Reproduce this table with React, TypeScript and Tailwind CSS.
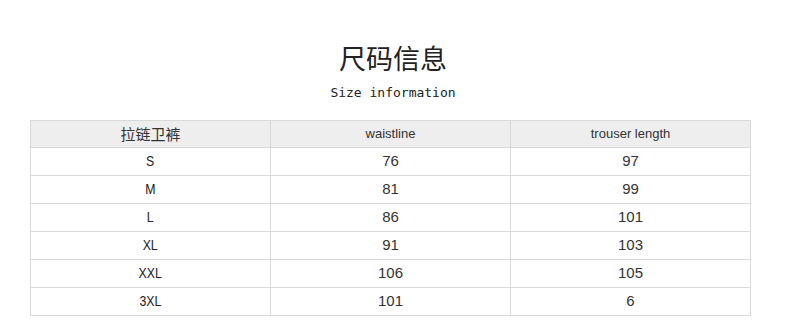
import React from 'react';

const rows = [
  { size: 'S', waist: '76', length: '97' },
  { size: 'M', waist: '81', length: '99' },
  { size: 'L', waist: '86', length: '101' },
  { size: 'XL', waist: '91', length: '103' },
  { size: 'XXL', waist: '106', length: '105' },
  { size: '3XL', waist: '101', length: '6' },
];

const cell = 'flex items-center justify-center border-r border-b border-[#d9d9d9]';

const App: React.FC = () => {
  return (
    <div className="w-[790px] h-[320px] bg-white overflow-hidden pt-[42px] pl-[30px] text-[#222]">
      <div className="w-[720px] flex flex-col items-center">
        <h1 className="text-[27px] leading-[32px] font-normal [font-family:'Noto_Sans_CJK_SC',sans-serif] translate-x-[3px]">
          尺码信息
        </h1>
        <p className="mt-[9px] text-[13px] leading-[20px] [font-family:'DejaVu_Sans_Mono','Liberation_Mono',monospace] translate-x-[3px]">
          Size information
        </p>
      </div>

      <div className="mt-[17px] w-[721px] grid grid-cols-[240px_240px_240px] border-l border-t border-[#d9d9d9]">
        <div className={`${cell} h-[27px] bg-[#eeeeee] text-[15px] [font-family:'Noto_Sans_CJK_SC',sans-serif] text-[#333]`}>
          拉链卫裤
        </div>
        <div className={`${cell} h-[27px] bg-[#eeeeee] text-[13px] [font-family:'Liberation_Sans',Arial,sans-serif] text-[#333]`}>
          waistline
        </div>
        <div className={`${cell} h-[27px] bg-[#eeeeee] text-[13px] [font-family:'Liberation_Sans',Arial,sans-serif] text-[#333]`}>
          trouser length
        </div>

        {rows.map((r) => (
          <React.Fragment key={r.size}>
            <div className={`${cell} h-[28px] text-[15px] [font-family:'Liberation_Sans',Arial,sans-serif] text-[#222]`}>
              <span className="inline-block scale-x-[0.82]">{r.size}</span>
            </div>
            <div className={`${cell} h-[28px] text-[15px] [font-family:'Liberation_Sans',Arial,sans-serif] text-[#333]`}>
              {r.waist}
            </div>
            <div className={`${cell} h-[28px] text-[15px] [font-family:'Liberation_Sans',Arial,sans-serif] text-[#333]`}>
              {r.length}
            </div>
          </React.Fragment>
        ))}
      </div>
    </div>
  );
};

export default App;
